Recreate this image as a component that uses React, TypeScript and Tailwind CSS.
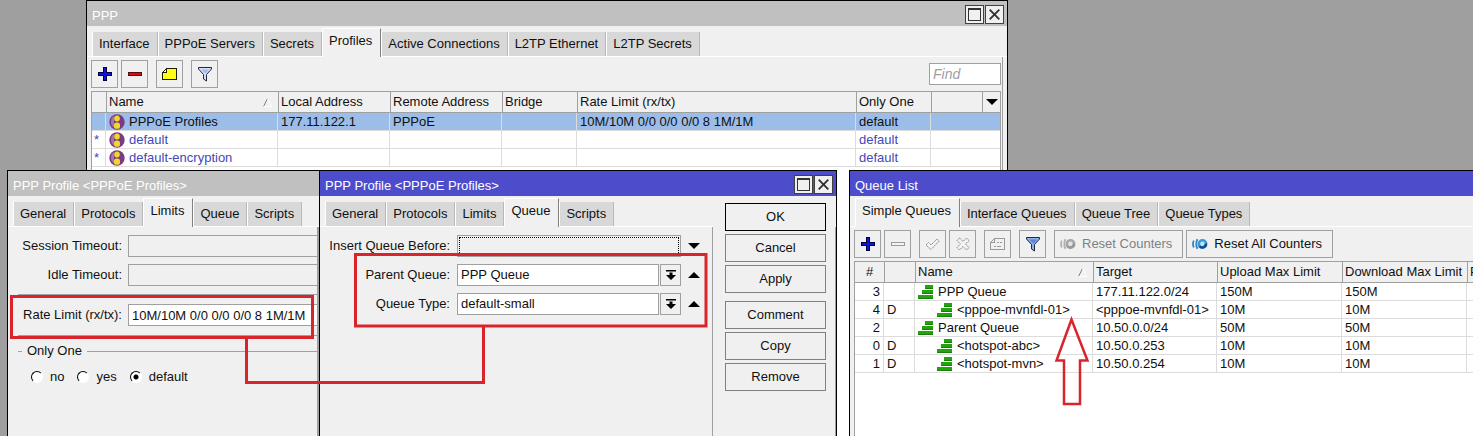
import React from "react";

type Tone = "active" | "inactive";

function PlusIcon() {
  return (
    <svg width="14" height="14" viewBox="0 0 14 14" shapeRendering="crispEdges">
      <path d="M5.5 .5h3v5h5v3h-5v5h-3v-5h-5v-3h5z" fill="#0a14e0" stroke="#00003c" />
    </svg>
  );
}

function MinusIcon({ disabled = false }: { disabled?: boolean }) {
  return (
    <svg width="14" height="14" viewBox="0 0 14 14" shapeRendering="crispEdges">
      <rect x=".5" y="5.5" width="13" height="3" fill={disabled ? "#f4f4f4" : "#d80a14"} stroke={disabled ? "#9a9a9a" : "#5a0a0e"} />
    </svg>
  );
}

function NoteIcon({ disabled = false }: { disabled?: boolean }) {
  const line = disabled ? "#9a9a9a" : "#1e1e00";
  return (
    <svg width="16" height="13" viewBox="0 0 16 13" shapeRendering="crispEdges">
      <path d="M4.500 .5h10v11H.5V4.500z" fill={disabled ? "#f0f0f0" : "#ffff14"} stroke={line} />
      <path d="M4.500 .5v4h-4" fill={disabled ? "#f0f0f0" : "#fff"} stroke={line} />
      {disabled && <path d="M7 4.500h2M10 4.500h2M4 8.500h2M7 8.500h4" stroke={line} />}
    </svg>
  );
}

function FunnelIcon({ dark = false }: { dark?: boolean }) {
  return (
    <svg width="16" height="16" viewBox="0 0 16 16">
      <path d="M1.500 1.500h13v1.500L9.500 8.500v6.500L6.500 13V8.500L1.500 3z" fill={dark ? "#8fb0ea" : "#d4dff5"} stroke="#23273a" strokeWidth="1" />
      <path d="M4 3.500h8L8.500 7.500z" fill={dark ? "#5d82d6" : "#a6bbe4"} />
    </svg>
  );
}

function CheckIcon() {
  return (
    <svg width="15" height="13" viewBox="0 0 15 13">
      <path d="M1 7l2.500-2.500L6 7l6-6 2 2.200-8 8.300z" fill="#f4f4f4" stroke="#8c8c8c" strokeDasharray="2 .6" />
    </svg>
  );
}

function CrossIcon() {
  return (
    <svg width="14" height="14" viewBox="0 0 14 14">
      <path d="M3.500 1L7 4.500 10.500 1 13 3.500 9.500 7l3.500 3.500-2.500 2.500L7 9.500 3.500 13 1 10.500 4.500 7 1 3.500z" fill="#f4f4f4" stroke="#8c8c8c" strokeDasharray="2 .6" />
    </svg>
  );
}

function CounterIcon({ disabled = false }: { disabled?: boolean }) {
  return (
    <svg width="16" height="12" viewBox="0 0 16 12">
      <path d="M1.800 2.500Q.2 6 1.800 9.500M5.500 1.200Q3 6 5.500 10.800" fill="none" stroke={disabled ? "#b0b0b0" : "#2e86c6"} strokeWidth="1.8" />
      <circle cx="10.500" cy="6" r="3.700" fill={disabled ? "#e4e4e4" : "#b4e6fa"} stroke={disabled ? "#a6a6a6" : "#3a9ad4"} strokeWidth="2.600" />
      <path d="M13.900 5.500A3.700 3.700 0 0 1 7.500 8.200" fill="none" stroke={disabled ? "#999" : "#164a90"} strokeWidth="2.400" />
    </svg>
  );
}

function ProfileIcon() {
  return (
    <svg width="16" height="16" viewBox="0 0 16 16" className="block">
      <circle cx="8" cy="8" r="7.700" fill="#7a3a86" />
      <path d="M2.500 4.500Q3.500 2.500 5 2v11.500Q2 11.500 2 8z" fill="#a674ac" />
      <ellipse cx="8" cy="4.600" rx="2.800" ry="3" fill="#eed82a" />
      <rect x="5" y="8.500" width="6" height="6.300" rx="2.600" fill="#eed82a" />
    </svg>
  );
}

function QueueIcon() {
  return (
    <svg width="16" height="14" viewBox="0 0 16 14" className="block" shapeRendering="crispEdges">
      <path d="M7 0h8v4H7zM4 5h11v4H4zM0 10h15v4H0z" fill="#22a40c" />
      <path d="M7 3h8v1H7zM4 8h11v1H4zM0 13h15v1H0z" fill="#178006" />
    </svg>
  );
}

function SortMark() {
  return (
    <svg width="9" height="9" viewBox="0 0 9 9">
      <path d="M.5 8.500L4.500 .5" stroke="#808080" />
      <path d="M4.500 .5l4 8h-8" fill="none" stroke="#fff" />
    </svg>
  );
}

function Triangle({ up = false }: { up?: boolean }) {
  return (
    <svg width="12" height="6" viewBox="0 0 12 6">
      <path d={up ? "M0 6L6 0l6 6z" : "M0 0h12L6 6z"} />
    </svg>
  );
}

function DropIcon() {
  return (
    <svg width="10" height="10" viewBox="0 0 10 10">
      <path d="M0 0h10v1.500H0zM3.500 2.500h3V5H10L5 10 0 5h3.500z" />
    </svg>
  );
}

function WindowButtons() {
  const box = "flex h-[19px] w-[19px] items-center justify-center border border-[#404040] bg-[#f0f0f0]";
  return (
    <div className="flex gap-px">
      <button aria-label="Maximize" className={box}>
        <svg width="13" height="13" viewBox="0 0 13 13" shapeRendering="crispEdges">
          <path d="M.5 1h12v11.500H.5z" fill="none" stroke="#333" />
          <path d="M0 1h13" stroke="#333" strokeWidth="2" />
        </svg>
      </button>
      <button aria-label="Close" className={box}>
        <svg width="11" height="11" viewBox="0 0 11 11">
          <path d="M.7 .7l9.600 9.600M10.300 .7L.7 10.300" stroke="#333" strokeWidth="1.900" />
        </svg>
      </button>
    </div>
  );
}

function Window({ title, tone, tabs, selected, place, controls = false, children }: {
  title: string;
  tone: Tone;
  tabs: string[];
  selected: string;
  place: string;
  controls?: boolean;
  children: React.ReactNode;
}) {
  return (
    <section className={`absolute bottom-0 flex flex-col overflow-hidden border-t border-l border-black bg-[#f0f0f0] ${place}`}>
      <header className={`flex h-[25px] shrink-0 items-center justify-between pt-0.5 pr-[3px] pl-[5px] text-white ${tone === "active" ? "bg-[#4d4dcc]" : "bg-[#c0c0c0]"}`}>
        <h2 className="pt-0.5 whitespace-nowrap">{title}</h2>
        {controls && <WindowButtons />}
      </header>
      <div className="relative flex min-h-0 flex-1 flex-col">
        <nav className="flex h-[31px] shrink-0 items-end border-b border-white pl-[5px]">
          {tabs.map((tab) => (
            <button
              key={tab}
              className={`border-l border-l-white pl-1.5 whitespace-nowrap ${
                tab === selected
                  ? "-mb-px h-[29px] border-t border-r border-t-white border-r-[#808080] bg-[#f0f0f0] pr-2 pb-1"
                  : "h-6 border-r border-r-[#b8b8b8] bg-[#d8d8d8] pr-[7px]"
              }`}
            >
              {tab}
            </button>
          ))}
        </nav>
        {children}
      </div>
    </section>
  );
}

function ToolButton({ label, children, gap = false, disabled = false }: {
  label: string;
  children: React.ReactNode;
  gap?: boolean;
  disabled?: boolean;
}) {
  return (
    <button aria-label={label} disabled={disabled} className={`flex h-7 w-[27px] items-center justify-center border border-[#a0a0a0] bg-[#f0f0f0] ${gap ? "ml-[5px]" : ""}`}>
      {children}
    </button>
  );
}

const th = "border-b border-l border-[#a0a0a0] bg-[#f0f0f0] px-0.5 text-left font-normal whitespace-nowrap";
const td = "border-r border-b border-[#dcdcdc] px-[3px] whitespace-nowrap";

const profiles = [
  { flag: "", name: "PPPoE Profiles", local: "177.11.122.1", remote: "PPPoE", rate: "10M/10M 0/0 0/0 0/0 8 1M/1M", only: "default" },
  { flag: "*", name: "default", local: "", remote: "", rate: "", only: "default" },
  { flag: "*", name: "default-encryption", local: "", remote: "", rate: "", only: "default" },
];

function ProfilesTable() {
  return (
    <table className="w-full table-fixed border-separate border-spacing-0">
      <colgroup>
        <col className="w-[14px]" />
        <col className="w-[172px]" />
        <col className="w-[112px]" />
        <col className="w-[112px]" />
        <col className="w-[75px]" />
        <col />
        <col className="w-[75px]" />
        <col className="w-[51px]" />
        <col className="w-[18px]" />
      </colgroup>
      <thead>
        <tr className="h-[21px]">
          <th className="border-b border-[#a0a0a0] bg-[#f0f0f0]" />
          <th className={th}>
            <span className="flex items-center justify-between pr-1">Name<SortMark /></span>
          </th>
          <th className={th}>Local Address</th>
          <th className={th}>Remote Address</th>
          <th className={th}>Bridge</th>
          <th className={th}>Rate Limit (rx/tx)</th>
          <th className={th}>Only One</th>
          <th className={th} />
          <th className={th}>
            <button aria-label="Columns" className="flex h-5 w-full items-center justify-center"><Triangle /></button>
          </th>
        </tr>
      </thead>
      <tbody>
        {profiles.map((p, i) => (
          <tr key={p.name} className={`h-[18px] ${i === 0 ? "bg-[#9cbde8]" : "text-[#4646b8]"}`}>
            <td className="border-r border-b border-[#dcdcdc] pl-0.5">{p.flag}</td>
            <td className={td}>
              <span className="flex items-center gap-1"><ProfileIcon />{p.name}</span>
            </td>
            <td className={td}>{p.local}</td>
            <td className={td}>{p.remote}</td>
            <td className={td} />
            <td className={td}>{p.rate}</td>
            <td className={td}>{p.only}</td>
            <td className="border-b border-[#dcdcdc]" colSpan={2} />
          </tr>
        ))}
      </tbody>
    </table>
  );
}

const queues = [
  { id: 3, flag: "", name: "PPP Queue", child: false, target: "177.11.122.0/24", up: "150M", down: "150M" },
  { id: 4, flag: "D", name: "<pppoe-mvnfdl-01>", child: true, target: "<pppoe-mvnfdl-01>", up: "10M", down: "10M" },
  { id: 2, flag: "", name: "Parent Queue", child: false, target: "10.50.0.0/24", up: "50M", down: "50M" },
  { id: 0, flag: "D", name: "<hotspot-abc>", child: true, target: "10.50.0.253", up: "10M", down: "10M" },
  { id: 1, flag: "D", name: "<hotspot-mvn>", child: true, target: "10.50.0.254", up: "10M", down: "10M" },
];

function QueueTable() {
  return (
    <table className="w-full min-w-[640px] table-fixed border-separate border-spacing-0">
      <colgroup>
        <col className="w-[29px]" />
        <col className="w-[31px]" />
        <col className="w-[178px]" />
        <col className="w-[124px]" />
        <col className="w-[125px]" />
        <col className="w-[125px]" />
        <col />
      </colgroup>
      <thead>
        <tr className="h-[21px]">
          <th className="border-b border-[#a0a0a0] bg-[#f0f0f0] font-normal">#</th>
          <th className={th} />
          <th className={th}>
            <span className="flex items-center justify-between pr-1">Name<SortMark /></span>
          </th>
          <th className={th}>Target</th>
          <th className={th}>Upload Max Limit</th>
          <th className={th}>Download Max Limit</th>
          <th className={th}>P</th>
        </tr>
      </thead>
      <tbody>
        {queues.map((q) => (
          <tr key={q.id} className="h-[18px]">
            <td className={`${td} text-right`}>{q.id}</td>
            <td className={td}>{q.flag}</td>
            <td className={td}>
              <span className={`flex items-center gap-1 ${q.child ? "pl-[19px]" : ""}`}><QueueIcon />{q.name}</span>
            </td>
            <td className={td}>{q.target}</td>
            <td className={td}>{q.up}</td>
            <td className={td}>{q.down}</td>
            <td className={td} />
          </tr>
        ))}
      </tbody>
    </table>
  );
}

const field = "h-[22px] border border-[#a0a0a0] px-[3px] outline-none";
const profileTabs = ["General", "Protocols", "Limits", "Queue", "Scripts"];

function Combo({ id, label, value }: { id: string; label: string; value: string }) {
  return (
    <>
      <label htmlFor={id} className="text-right">{label}</label>
      <div className="flex gap-px">
        <select id={id} className={`${field} min-w-0 flex-1 appearance-none bg-white`} defaultValue={value}>
          <option>{value}</option>
        </select>
        <button aria-label={`Choose ${label}`} className="flex h-[22px] w-[21px] items-center justify-center border border-[#a0a0a0]"><DropIcon /></button>
      </div>
      <button aria-label={`Clear ${label}`} className="flex justify-center"><Triangle up /></button>
    </>
  );
}

function LimitsForm() {
  return (
    <form className="flex flex-col pt-2">
      <div className="grid grid-cols-[114px_1fr] items-center gap-x-1.5 gap-y-[7px] whitespace-nowrap">
        <label htmlFor="session" className="text-right">Session Timeout:</label>
        <input id="session" className={`${field} min-w-0 border-r-0 bg-[#f0f0f0]`} />
        <label htmlFor="idle" className="text-right">Idle Timeout:</label>
        <input id="idle" className={`${field} min-w-0 border-r-0 bg-[#f0f0f0]`} />
      </div>
      <div className="mt-2 ml-2.5 border-t border-[#a0a0a0]" />
      <div className="mt-[9px] grid grid-cols-[114px_1fr] items-center gap-x-1.5 whitespace-nowrap">
        <label htmlFor="rate" className="text-right">Rate Limit (rx/tx):</label>
        <input id="rate" className={`${field} min-w-0 border-r-0 bg-white`} defaultValue="10M/10M 0/0 0/0 0/0 8 1M/1M" />
      </div>
      <div className="mt-[9px] ml-2.5 border-t border-[#a0a0a0]" />
      <fieldset className="mt-[7px] ml-2.5 border-t border-[#a0a0a0]">
        <legend className="ml-1 px-[5px]">Only One</legend>
        <div className="mt-2.5 flex pl-[13px]">
          {["no", "yes", "default"].map((option) => (
            <label key={option} className="flex items-center gap-[7px] pr-[13px]">
              <input
                type="radio"
                name="only-one"
                defaultChecked={option === "default"}
                className="h-3 w-3 appearance-none rounded-full border border-t-black border-r-white border-b-white border-l-black bg-white checked:bg-[radial-gradient(circle,#000_2px,#fff_3px)]"
              />
              {option}
            </label>
          ))}
        </div>
      </fieldset>
    </form>
  );
}

function QueueForm() {
  return (
    <form className="grid grid-cols-[130px_224px_12px] content-start items-center gap-x-[7px] gap-y-[7px] pt-2 whitespace-nowrap">
      <label htmlFor="before" className="text-right">Insert Queue Before:</label>
      <div className="h-[22px] border border-[#a0a0a0] p-px">
        <select id="before" className="h-full w-full appearance-none border border-dotted border-black bg-[#f0f0f0] outline-none" defaultValue="">
          <option value="" />
        </select>
      </div>
      <button aria-label="Expand Insert Queue Before" className="flex justify-center"><Triangle /></button>
      <Combo id="parent" label="Parent Queue:" value="PPP Queue" />
      <Combo id="type" label="Queue Type:" value="default-small" />
    </form>
  );
}

function Annotations() {
  return (
    <svg className="pointer-events-none absolute top-0 left-0" width="1100" height="436" viewBox="0 0 1100 436" fill="none" stroke="#da242c" strokeWidth="3">
      <path d="M11.500 296.500h301v41h-301z" />
      <path d="M355.500 254.500h350.500v71.500H355.500z" />
      <path d="M246.500 338v44.500H483.500V326" />
      <path d="M1071.500 319.500L1056.500 360.500h7.500V404h16v-43.500h7.500z" strokeWidth="2.500" />
    </svg>
  );
}

export default function App() {
  return (
    <main className="relative h-screen overflow-hidden bg-[#9f9f9f] font-['Liberation_Sans',Arial,sans-serif] text-[13px] leading-4 text-[#101010]">
      <Window
        title="PPP"
        tone="inactive"
        tabs={["Interface", "PPPoE Servers", "Secrets", "Profiles", "Active Connections", "L2TP Ethernet", "L2TP Secrets"]}
        selected="Profiles"
        place="top-0 left-[86px] w-[922px] border-r"
        controls
      >
        <div className="mr-1 flex flex-1 flex-col border-r border-[#a0a0a0] pr-px pl-1">
          <div className="flex items-center gap-[3px] py-[3px]">
            <ToolButton label="Add"><PlusIcon /></ToolButton>
            <ToolButton label="Remove"><MinusIcon /></ToolButton>
            <ToolButton label="Comment" gap><NoteIcon /></ToolButton>
            <ToolButton label="Filter" gap><FunnelIcon /></ToolButton>
            <input aria-label="Find" placeholder="Find" className="ml-auto h-[22px] w-[72px] border border-[#a0a0a0] bg-white px-[3px] text-sm italic outline-none placeholder:text-[#a0a0a0]" />
          </div>
          <div className="flex-1 border-t border-r border-l border-[#a0a0a0] bg-white">
            <ProfilesTable />
          </div>
        </div>
      </Window>

      <Window title="PPP Profile <PPPoE Profiles>" tone="inactive" tabs={profileTabs} selected="Limits" place="top-[170px] left-[7px] w-[312px]">
        <div className="flex-1 border-r-2 border-[#a0a0a0]">
          <LimitsForm />
        </div>
      </Window>

      <Window title="PPP Profile <PPPoE Profiles>" tone="active" tabs={profileTabs} selected="Queue" place="top-[170px] left-[319px] w-[518px] border-r" controls>
        <div className="flex flex-1 border-r border-[#a0a0a0]">
          <div className="flex-1 border-r border-[#a0a0a0]">
            <QueueForm />
          </div>
          <div className="w-[122px] shrink-0" />
        </div>
        <div className="absolute top-0 right-px flex w-[122px] flex-col gap-[3px] bg-[#f0f0f0] pt-[7px] pr-[9px] pl-3">
          <button className="h-7 border border-black bg-[#f0f0f0]">OK</button>
          <button className="h-7 border border-[#808080] bg-[#f0f0f0]">Cancel</button>
          <button className="h-7 border border-[#808080] bg-[#f0f0f0]">Apply</button>
          <button className="mt-[5px] h-7 border border-[#808080] bg-[#f0f0f0]">Comment</button>
          <button className="h-7 border border-[#808080] bg-[#f0f0f0]">Copy</button>
          <button className="h-7 border border-[#808080] bg-[#f0f0f0]">Remove</button>
        </div>
      </Window>

      <Window
        title="Queue List"
        tone="active"
        tabs={["Simple Queues", "Interface Queues", "Queue Tree", "Queue Types"]}
        selected="Simple Queues"
        place="top-[170px] right-0 left-[849px]"
      >
        <div className="flex min-w-0 flex-1 flex-col pl-1">
          <div className="flex items-center gap-[3px] py-[3px] whitespace-nowrap">
            <ToolButton label="Add"><PlusIcon /></ToolButton>
            <ToolButton label="Remove" disabled><MinusIcon disabled /></ToolButton>
            <ToolButton label="Enable" gap disabled><CheckIcon /></ToolButton>
            <ToolButton label="Disable" disabled><CrossIcon /></ToolButton>
            <ToolButton label="Comment" gap disabled><NoteIcon disabled /></ToolButton>
            <ToolButton label="Filter" gap><FunnelIcon dark /></ToolButton>
            <button disabled className="ml-[5px] flex h-7 items-center gap-1.5 border border-[#a0a0a0] pr-2.5 pl-[5px] text-[#808080]">
              <CounterIcon disabled />Reset Counters
            </button>
            <button className="flex h-7 items-center gap-1.5 border border-[#a0a0a0] pr-2.5 pl-[5px]">
              <CounterIcon />Reset All Counters
            </button>
          </div>
          <div className="flex-1 overflow-hidden border-t border-l border-[#a0a0a0] bg-white">
            <QueueTable />
          </div>
        </div>
      </Window>

      <Annotations />
    </main>
  );
}
